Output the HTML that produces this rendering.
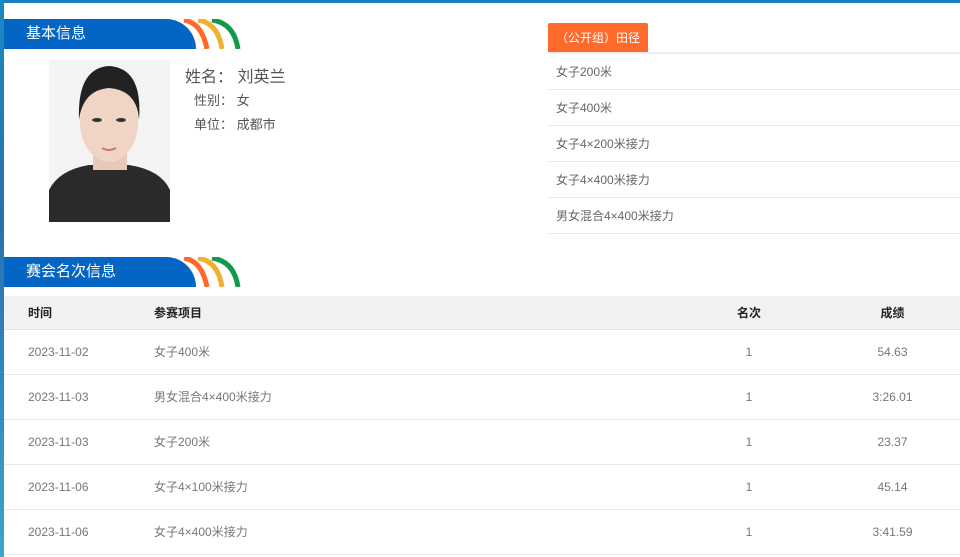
<!DOCTYPE html>
<html><head><meta charset="utf-8"><style>
*{margin:0;padding:0;box-sizing:border-box}
body{width:960px;height:557px;overflow:hidden;background:#fff;font-family:"Liberation Sans","Noto Sans CJK SC",sans-serif;position:relative}
.topbar{position:absolute;left:0;top:0;width:960px;height:3px;background:#1a7fc0}
.leftbar{position:absolute;left:0;top:0;width:4px;height:557px;background:linear-gradient(#1a8ac0,#2a6fb0 40%,#3aa6c8)}
.hd{position:absolute;left:4px;height:30px;width:240px}
.hd .bar{position:absolute;left:0;top:0;width:192px;height:30px;background:#0466c4;border-top-right-radius:30px 30px;color:#fff;font-size:15px;line-height:30px;padding-left:22px}
.tab{position:absolute;left:548px;top:23px;width:100px;height:30px;background:#ff6a2a;color:#fff;font-size:12px;line-height:30px;text-align:center;border-radius:2px 2px 0 0}
.list{position:absolute;left:548px;top:52px;width:412px;border-top:2px solid #eee}
.list div{height:36px;line-height:36px;border-bottom:1px solid #e8e8e8;font-size:12px;color:#666;padding-left:8px}
.info{position:absolute;color:#555}
table{position:absolute;left:4px;top:296px;width:956px;border-collapse:collapse;font-size:12px;color:#777;table-layout:fixed}
th{height:33px;background:#f2f2f2;color:#222;font-weight:bold;text-align:left;border-bottom:1px solid #e5e5e5}
td{height:45px;border-bottom:1px solid #e8e8e8}
.c1{padding-left:24px;width:150px}.c2{width:545px}.c3{text-align:center!important;width:100px}.c4{text-align:center!important;padding-left:26px;width:161px}
</style></head><body>
<div class="topbar"></div><div class="leftbar"></div>
<div class="hd" style="top:19px"><div class="bar">基本信息</div>
<svg style="position:absolute;left:170px;top:0" width="70" height="30"><path d="M10 1 Q28 4 33 30" stroke="#ff6a2a" stroke-width="5" fill="none"/><path d="M24 1 Q44 4 48 30" stroke="#f0b030" stroke-width="5" fill="none"/><path d="M38 1 Q60 4 64 30" stroke="#129a48" stroke-width="5" fill="none"/></svg></div>
<div class="hd" style="top:257px"><div class="bar">赛会名次信息</div>
<svg style="position:absolute;left:170px;top:0" width="70" height="30"><path d="M10 1 Q28 4 33 30" stroke="#ff6a2a" stroke-width="5" fill="none"/><path d="M24 1 Q44 4 48 30" stroke="#f0b030" stroke-width="5" fill="none"/><path d="M38 1 Q60 4 64 30" stroke="#129a48" stroke-width="5" fill="none"/></svg></div>
<svg style="position:absolute;left:49px;top:60px" width="121" height="162">
<rect width="121" height="162" fill="#f4f4f4"/>
<path d="M0 162 L0 130 Q10 110 40 105 L80 105 Q112 110 121 130 L121 162Z" fill="#2a2a2a"/>
<rect x="44" y="80" width="34" height="30" fill="#e8c8b8"/>
<ellipse cx="60" cy="62" rx="29" ry="40" fill="#f0d4c4"/>
<path d="M30 60 Q28 8 60 6 Q94 8 90 60 Q88 30 60 28 Q34 30 30 60Z" fill="#222"/>
<ellipse cx="48" cy="60" rx="5" ry="2" fill="#333"/><ellipse cx="72" cy="60" rx="5" ry="2" fill="#333"/>
<path d="M53 88 Q60 92 67 88" stroke="#c77" stroke-width="2" fill="none"/>
</svg>
<div class="info" style="left:185px;top:63px;font-size:16px">姓名：&nbsp;刘英兰</div>
<div class="info" style="left:194px;top:90px;font-size:13px">性别：&nbsp;女</div>
<div class="info" style="left:194px;top:114px;font-size:13px">单位：&nbsp;成都市</div>
<div class="tab">（公开组）田径</div>
<div class="list"><div>女子200米</div><div>女子400米</div><div>女子4×200米接力</div><div>女子4×400米接力</div><div>男女混合4×400米接力</div></div>
<table>
<tr><th class="c1">时间</th><th class="c2">参赛项目</th><th class="c3">名次</th><th class="c4">成绩</th></tr>
<tr><td class="c1">2023-11-02</td><td>女子400米</td><td class="c3">1</td><td class="c4">54.63</td></tr>
<tr><td class="c1">2023-11-03</td><td>男女混合4×400米接力</td><td class="c3">1</td><td class="c4">3:26.01</td></tr>
<tr><td class="c1">2023-11-03</td><td>女子200米</td><td class="c3">1</td><td class="c4">23.37</td></tr>
<tr><td class="c1">2023-11-06</td><td>女子4×100米接力</td><td class="c3">1</td><td class="c4">45.14</td></tr>
<tr><td class="c1">2023-11-06</td><td>女子4×400米接力</td><td class="c3">1</td><td class="c4">3:41.59</td></tr>
</table>
</body></html>
